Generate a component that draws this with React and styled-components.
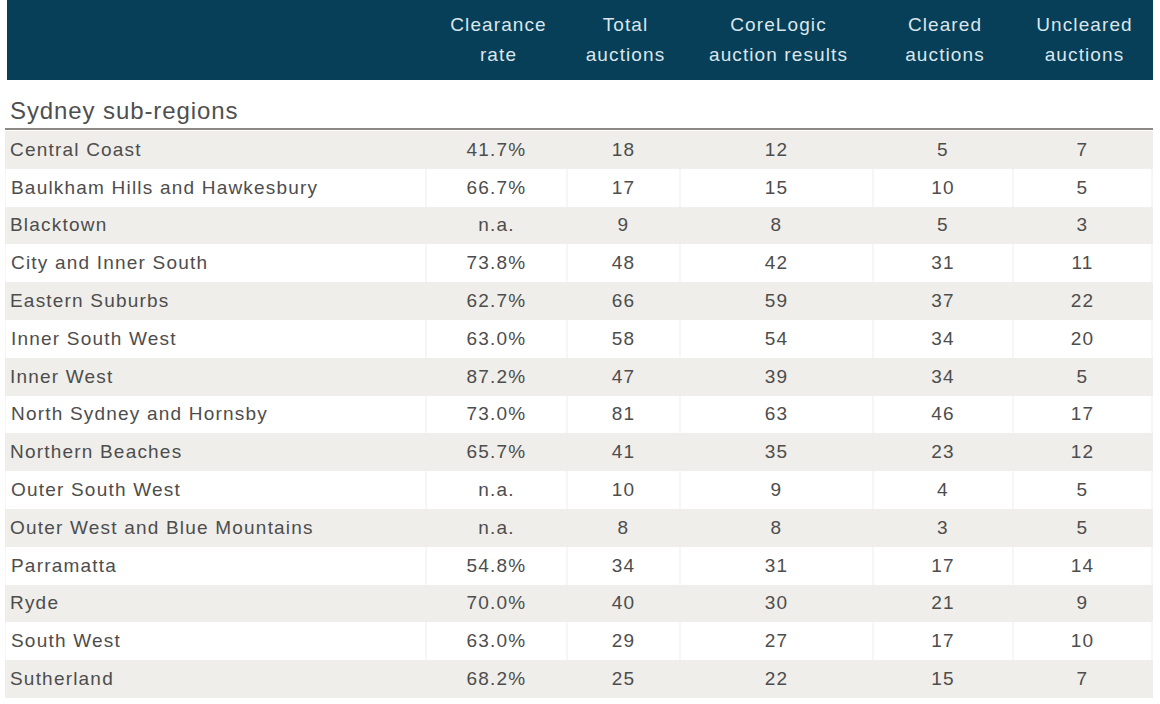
import React from "react";
import styled, { createGlobalStyle } from "styled-components";

const GlobalStyle = createGlobalStyle`
  html, body {
    margin: 0;
    padding: 0;
    background: #fff;
  }
  body {
    font-family: "Liberation Sans", Arial, sans-serif;
  }
`;

const COLUMNS = "421px 141px 113px 193px 140px 139px";

const Table = styled.div`
  width: 1148px;
  margin-left: 5px;
  display: flex;
  flex-direction: column;
`;

const Header = styled.div`
  display: grid;
  grid-template-columns: ${COLUMNS};
  align-items: center;
  height: 80px;
  margin-left: 2px;
  background: #063f57;
  color: #dbe6ec;
  font-size: 19px;
  line-height: 30px;
  letter-spacing: 1.1px;
`;

const HeadCell = styled.div`
  text-align: center;
`;

const SectionTitle = styled.div`
  height: 50px;
  display: flex;
  align-items: flex-end;
  padding-left: 5px;
  padding-bottom: 3px;
  box-sizing: border-box;
  font-size: 24px;
  letter-spacing: 0.9px;
  color: #4f4f4f;
  border-bottom: 2px solid #8c8884;
`;

const Body = styled.div`
  display: grid;
  grid-auto-rows: 37.8px;
  padding-top: 1px;
`;

const Row = styled.div`
  display: grid;
  grid-template-columns: ${COLUMNS};
  background: ${(p) => (p.$shaded ? "#efeeea" : "#f6f6f5")};
  color: #4d4d4d;
  font-size: 19px;
  letter-spacing: 1.2px;
`;

const Cell = styled.div`
  display: flex;
  align-items: center;
  justify-content: ${(p) => (p.$label ? "flex-start" : "center")};
  padding-left: ${(p) => (p.$label ? "5px" : "0")};
  background: ${(p) => (p.$shaded ? "transparent" : "#fff")};
  margin: ${(p) => (p.$shaded ? "0" : "0 1px")};
  white-space: nowrap;
`;

const headers = [
  "",
  ["Clearance", "rate"],
  ["Total", "auctions"],
  ["CoreLogic", "auction results"],
  ["Cleared", "auctions"],
  ["Uncleared", "auctions"],
];

const rows = [
  ["Central Coast", "41.7%", 18, 12, 5, 7],
  ["Baulkham Hills and Hawkesbury", "66.7%", 17, 15, 10, 5],
  ["Blacktown", "n.a.", 9, 8, 5, 3],
  ["City and Inner South", "73.8%", 48, 42, 31, 11],
  ["Eastern Suburbs", "62.7%", 66, 59, 37, 22],
  ["Inner South West", "63.0%", 58, 54, 34, 20],
  ["Inner West", "87.2%", 47, 39, 34, 5],
  ["North Sydney and Hornsby", "73.0%", 81, 63, 46, 17],
  ["Northern Beaches", "65.7%", 41, 35, 23, 12],
  ["Outer South West", "n.a.", 10, 9, 4, 5],
  ["Outer West and Blue Mountains", "n.a.", 8, 8, 3, 5],
  ["Parramatta", "54.8%", 34, 31, 17, 14],
  ["Ryde", "70.0%", 40, 30, 21, 9],
  ["South West", "63.0%", 29, 27, 17, 10],
  ["Sutherland", "68.2%", 25, 22, 15, 7],
];

export default function App() {
  return (
    <>
      <GlobalStyle />
      <Table>
        <Header>
          {headers.map((h, i) => (
            <HeadCell key={i}>
              {Array.isArray(h) ? (
                <>
                  {h[0]}
                  <br />
                  {h[1]}
                </>
              ) : null}
            </HeadCell>
          ))}
        </Header>
        <SectionTitle>Sydney sub-regions</SectionTitle>
        <Body>
          {rows.map((r, i) => {
            const shaded = i % 2 === 0;
            return (
              <Row key={r[0]} $shaded={shaded}>
                {r.map((v, j) => (
                  <Cell key={j} $label={j === 0} $shaded={shaded}>
                    {v}
                  </Cell>
                ))}
              </Row>
            );
          })}
        </Body>
      </Table>
    </>
  );
}
